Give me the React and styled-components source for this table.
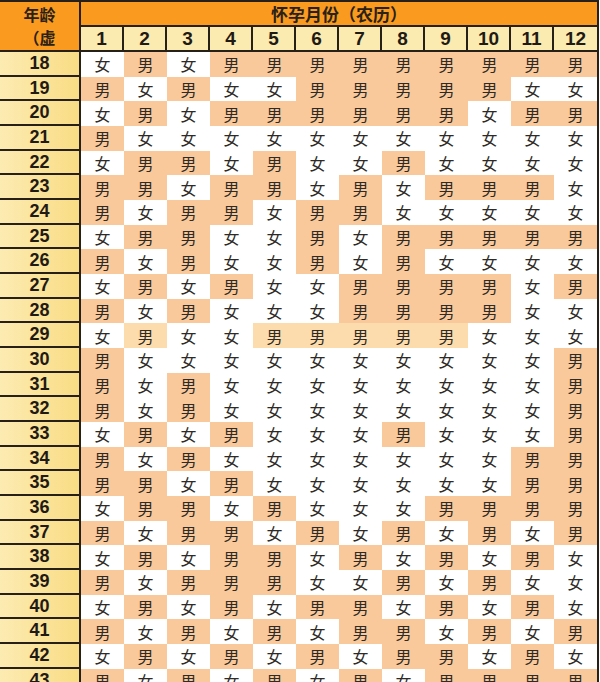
import React from 'react';
import styled, { createGlobalStyle } from 'styled-components';

const rows = [
  [18, '女男女男男男男男男男男男'],
  [19, '男女男女女男男男男男女女'],
  [20, '女男女男男男男男男女男男'],
  [21, '男女女女女女女女女女女女'],
  [22, '女男男女男女女男女女女女'],
  [23, '男男女男男女男女男男男女'],
  [24, '男女男男女男男女女女女女'],
  [25, '女男男女女男女男男男男男'],
  [26, '男女男女女男女男女女女女'],
  [27, '女男女男女女男男男男女男'],
  [28, '男女男女女女男男男男女女'],
  [29, '女男女女男男男男男女女女'],
  [30, '男女女女女女女女女女女男'],
  [31, '男女男女女女女女女女女男'],
  [32, '男女男女女女女女女女女男'],
  [33, '女男女男女女女男女女女男'],
  [34, '男女男女女女女女女女男男'],
  [35, '男男女男女女女女女女男男'],
  [36, '女男男女男女女女男男男男'],
  [37, '男女男男女男女男女男女男'],
  [38, '女男女男男女男女男女男女'],
  [39, '男女男男男女女男女男女女'],
  [40, '女男女男女男男女男女男女'],
  [41, '男女男女男女男男女男女男'],
  [42, '女男女男女男女男男女男女'],
  [43, '男女男女男女男女男男男男'],
];

const months = [1, 2, 3, 4, 5, 6, 7, 8, 9, 10, 11, 12];

const GlobalStyle = createGlobalStyle`
  body {
    margin: 0;
    background: #ffffff;
    font-family: "Liberation Sans", "Noto Sans CJK SC", sans-serif;
  }
`;

const Chart = styled.div`
  display: grid;
  grid-template-columns: 81px repeat(12, 43px);
  grid-template-rows: 25px 25px;
  grid-auto-rows: 24.68px;
  width: 597px;
  border-top: 2px solid #262018;
  border-right: 2px solid #262018;
`;

const Corner = styled.div`
  grid-row: span 2;
  background: #fa9a1e;
  border-right: 2px solid #262018;
  border-bottom: 2px solid #262018;
  display: flex;
  flex-direction: column;
  align-items: center;
  justify-content: center;
  font-family: "Noto Sans CJK SC", sans-serif;
  font-weight: 700;
  font-size: 16px;
  color: #2a2118;

  span {
    display: block;
    height: 23px;
    line-height: 23px;
  }
`;

const Title = styled.div`
  grid-column: span 12;
  background: #fa9a1e;
  border-bottom: 2px solid #262018;
  display: flex;
  align-items: center;
  justify-content: center;
  font-family: "Noto Sans CJK SC", sans-serif;
  font-weight: 700;
  font-size: 17px;
  color: #2a2118;
`;

const Month = styled.div`
  background: #fcebb0;
  border-right: ${p => (p.$last ? 'none' : '2px solid #262018')};
  border-bottom: 2px solid #262018;
  display: flex;
  align-items: center;
  justify-content: center;
  font-weight: 700;
  font-size: 19px;
  color: #1f1a14;
`;

const Age = styled.div`
  background: linear-gradient(to right, #fcebb2, #f9dc84);
  border-right: 2px solid #262018;
  border-bottom: 2px solid #262018;
  display: flex;
  align-items: center;
  justify-content: center;
  font-weight: 700;
  font-size: 18px;
  color: #1f1a14;
`;

const Cell = styled.div`
  background: ${p => (p.$boy ? (p.$soft ? '#fcdcad' : '#f9c99b') : '#ffffff')};
  display: flex;
  align-items: center;
  justify-content: center;
  font-family: "Noto Sans CJK SC", sans-serif;
  font-size: 16px;
  color: #2e2a26;
`;

export default function App() {
  return (
    <>
      <GlobalStyle />
      <Chart>
        <Corner>
          <span>年龄</span>
          <span>（虚</span>
        </Corner>
        <Title>怀孕月份（农历）</Title>
        {months.map(m => (
          <Month key={m} $last={m === 12}>{m}</Month>
        ))}
        {rows.map(([age, genders]) => (
          <React.Fragment key={age}>
            <Age>{age}</Age>
            {genders.split('').map((g, i) => (
              <Cell key={i} $boy={g === '男'} $soft={age === 29}>{g}</Cell>
            ))}
          </React.Fragment>
        ))}
      </Chart>
    </>
  );
}
